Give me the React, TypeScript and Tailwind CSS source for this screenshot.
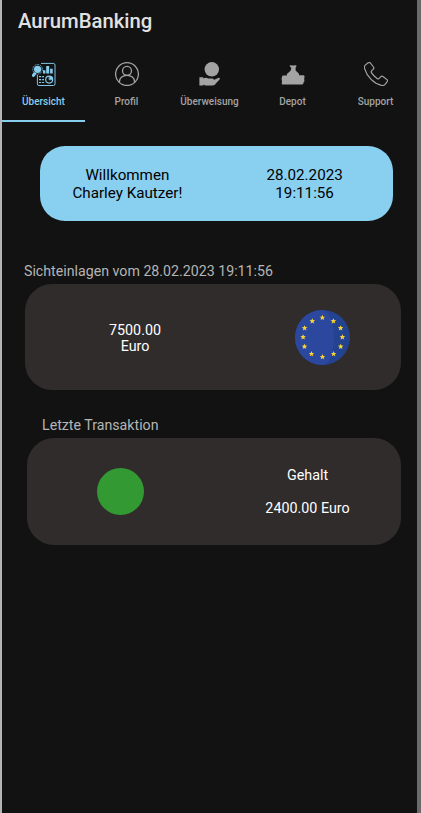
import type { ReactNode } from 'react';

function OverviewIcon() {
  return (
    <svg className="h-6 w-6" viewBox="0 0 24 24" fill="none" stroke="currentColor">
      <path d="M9 1.4h12.4a1.6 1.6 0 0 1 1.6 1.6v18.9a1.6 1.6 0 0 1-1.6 1.6H7a1.6 1.6 0 0 1-1.6-1.6v-9" strokeWidth="0.95" />
      <circle cx="5.6" cy="7.3" r="3.6" fill="currentColor" stroke="none" />
      <circle cx="5.6" cy="7.3" r="4.8" strokeWidth="0.7" strokeDasharray="2 0.7" />
      <path d="M2.5 11.8 1.4 13.4" strokeWidth="3" strokeLinecap="round" />
      <path d="M11 8.2h2.4v3.4H11zM14.2 4h3v7.6h-3zM18.1 6.7h2.6v4.9h-2.6z" fill="currentColor" stroke="none" />
      <path d="M7 14.6h2.2M10.2 14.6H12M7 17.6h2.2M10.2 17.6H12M7 20.5h2.2M10.2 20.5H12" strokeWidth="1.1" />
      <circle cx="17.2" cy="17.6" r="3.5" strokeWidth="1.1" />
      <path d="M17.2 14.2v3.5h3.5" strokeWidth="0.9" />
      <path d="M17.6 14.3h1.8l1.3 1.7v1.3h-3.1z" fill="currentColor" stroke="none" />
    </svg>
  );
}

function ProfileIcon() {
  return (
    <svg className="h-6 w-6" viewBox="0 0 24 24" fill="none" stroke="currentColor" strokeWidth="1.3">
      <circle cx="12" cy="12.1" r="11.4" />
      <circle cx="12" cy="8.8" r="4.5" />
      <path d="M4.5 20.8v-1.2c0-3.7 3.2-6.3 7.5-6.3s7.5 2.6 7.5 6.3v1.2" />
    </svg>
  );
}

function TransferIcon() {
  return (
    <svg className="h-6 w-6" viewBox="0 0 24 24" fill="currentColor">
      <circle cx="13.8" cy="7.3" r="7.2" />
      <path d="M1.4 15.2h3.9v1.2c1.8-.8 3.4-.8 5.1.1h4.1c1 0 1.5.8 1.2 1.5l4.4-2.1c1-.5 2.1.4 1.7 1.3l-4.2 4.5c-.7.9-1.5 1.7-3 1.7H7.2l-1.9-.8v1H1.4z" />
    </svg>
  );
}

function DepotIcon() {
  return (
    <svg className="h-6 w-6" viewBox="0 0 24 24" fill="currentColor">
      <path d="M8.8 3.2 12 3.6l3.1-.4.4 1-.9 1.4v2.8l3.4 3.4v1.5h4.6l1 .8-.4 2.8.2 2.6-1 .9v1.4l-1.2.8H1.2l-.5-.8.3-2.1-.4-3 .5-2.2.6-1h4.2v-1.5l3.6-3.3.9-2.7-1.5-1.4z" />
    </svg>
  );
}

function SupportIcon() {
  return (
    <svg className="h-6 w-6" viewBox="0 0 24 24" fill="none" stroke="currentColor" strokeWidth="1.2" strokeLinejoin="round">
      <path d="M4.2.8C5 .3 5.8.4 6.4 1l3.1 4c.5.7.4 1.5-.2 2.1L7.6 8.8c-.6.7-.5 1.4 0 2.1 1.4 2.3 3.2 4.1 5.5 5.5.7.5 1.5.5 2.1-.1l1.7-1.7c.6-.6 1.4-.7 2.1-.1l3.9 3.1c.7.5.8 1.4.3 2.1l-2.1 2.7c-.9 1-2.2 1.3-3.6 1C9.8 21.5 3 14.7.6 6.6.2 5.1.4 3.8 1.5 2.9z" />
    </svg>
  );
}

function Tab({ icon, label, active = false }: { icon: ReactNode; label: string; active?: boolean }) {
  return (
    <button
      className={
        active
          ? 'flex flex-1 flex-col items-center border-b-2 border-[#87ceee] pt-[22px] text-[#87ceee]'
          : 'flex flex-1 flex-col items-center border-b-2 border-transparent pt-[22px] text-[#a3a3a3]'
      }
    >
      {icon}
      <span className="mt-[10px] text-[10px] leading-3 font-medium whitespace-nowrap">{label}</span>
    </button>
  );
}

const STARS = [
  [27.4, 7.6], [38.4, 11], [45.6, 18], [47.4, 27], [45.7, 36.5], [38.6, 43.8],
  [27.5, 46.8], [16.5, 43.8], [9.5, 36.5], [8.1, 27], [9.6, 18], [17.3, 11],
];

function EuroFlag() {
  return (
    <svg className="h-[55px] w-[55px]" viewBox="0 0 55 55">
      <circle cx="27.5" cy="27.5" r="27.5" fill="#234391" />
      <path d="M27.5 0C34 0 39 12 39 27.5S34 55 27.5 55a27.5 27.5 0 0 1 0-55z" fill="#2c489e" />
      {STARS.map(([x, y]) => (
        <path
          key={`${x}-${y}`}
          transform={`translate(${x} ${y})`}
          d="M0-2.8.8-.9 2.8-.8 1.2.5 1.8 2.5 0 1.4-1.8 2.5-1.2.5-2.8-.8-.8-.9z"
          fill="#f9d435"
        />
      ))}
    </svg>
  );
}

export default function App() {
  return (
    <div className="h-[813px] w-[421px] overflow-hidden border-r-4 border-l-2 border-r-[#6b6969] border-l-[#b3b4b4] bg-[#121212] font-['Roboto',sans-serif]">
      <header className="flex h-10 items-center pt-[2px] pl-4">
        <h1 className="text-[20.3px] leading-6 font-medium text-[#e1e1e1]">AurumBanking</h1>
      </header>

      <nav className="flex h-[82px]">
        <Tab icon={<OverviewIcon />} label="Übersicht" active />
        <Tab icon={<ProfileIcon />} label="Profil" />
        <Tab icon={<TransferIcon />} label="Überweisung" />
        <Tab icon={<DepotIcon />} label="Depot" />
        <Tab icon={<SupportIcon />} label="Support" />
      </nav>

      <main>
        <section className="mt-6 mr-6 ml-[37.5px] grid h-[75px] grid-cols-2 items-center rounded-[25px] bg-[#89cff0] text-center text-[15.2px] leading-[18px] text-black">
          <p className="pr-px">Willkommen<br />Charley Kautzer!</p>
          <p>28.02.2023<br />19:11:56</p>
        </section>

        <h2 className="mt-[42px] ml-[22px] text-[14.2px] leading-4 text-[#b5b5b5]">
          Sichteinlagen vom 28.02.2023 19:11:56
        </h2>
        <section className="mt-[5px] mr-4 ml-[23px] grid h-[106px] grid-cols-[220px_1fr] items-center rounded-[27px] bg-[#302c2c] text-center text-[14.3px] leading-[16.5px] text-white">
          <p className="pt-[2px]">7500.00<br />Euro</p>
          <div className="flex pl-[50px]"><EuroFlag /></div>
        </section>

        <h2 className="mt-[27px] ml-10 text-[14.2px] leading-4 text-[#b5b5b5]">Letzte Transaktion</h2>
        <section className="mt-[5px] mr-4 ml-[25px] grid h-[107px] grid-cols-2 items-center justify-items-center rounded-[27px] bg-[#302c2c] text-center text-[14.3px] leading-[16.5px] text-white">
          <div className="h-[47px] w-[47px] rounded-full bg-[#339a33]" />
          <p>Gehalt<br /><br />2400.00 Euro</p>
        </section>
      </main>
    </div>
  );
}
